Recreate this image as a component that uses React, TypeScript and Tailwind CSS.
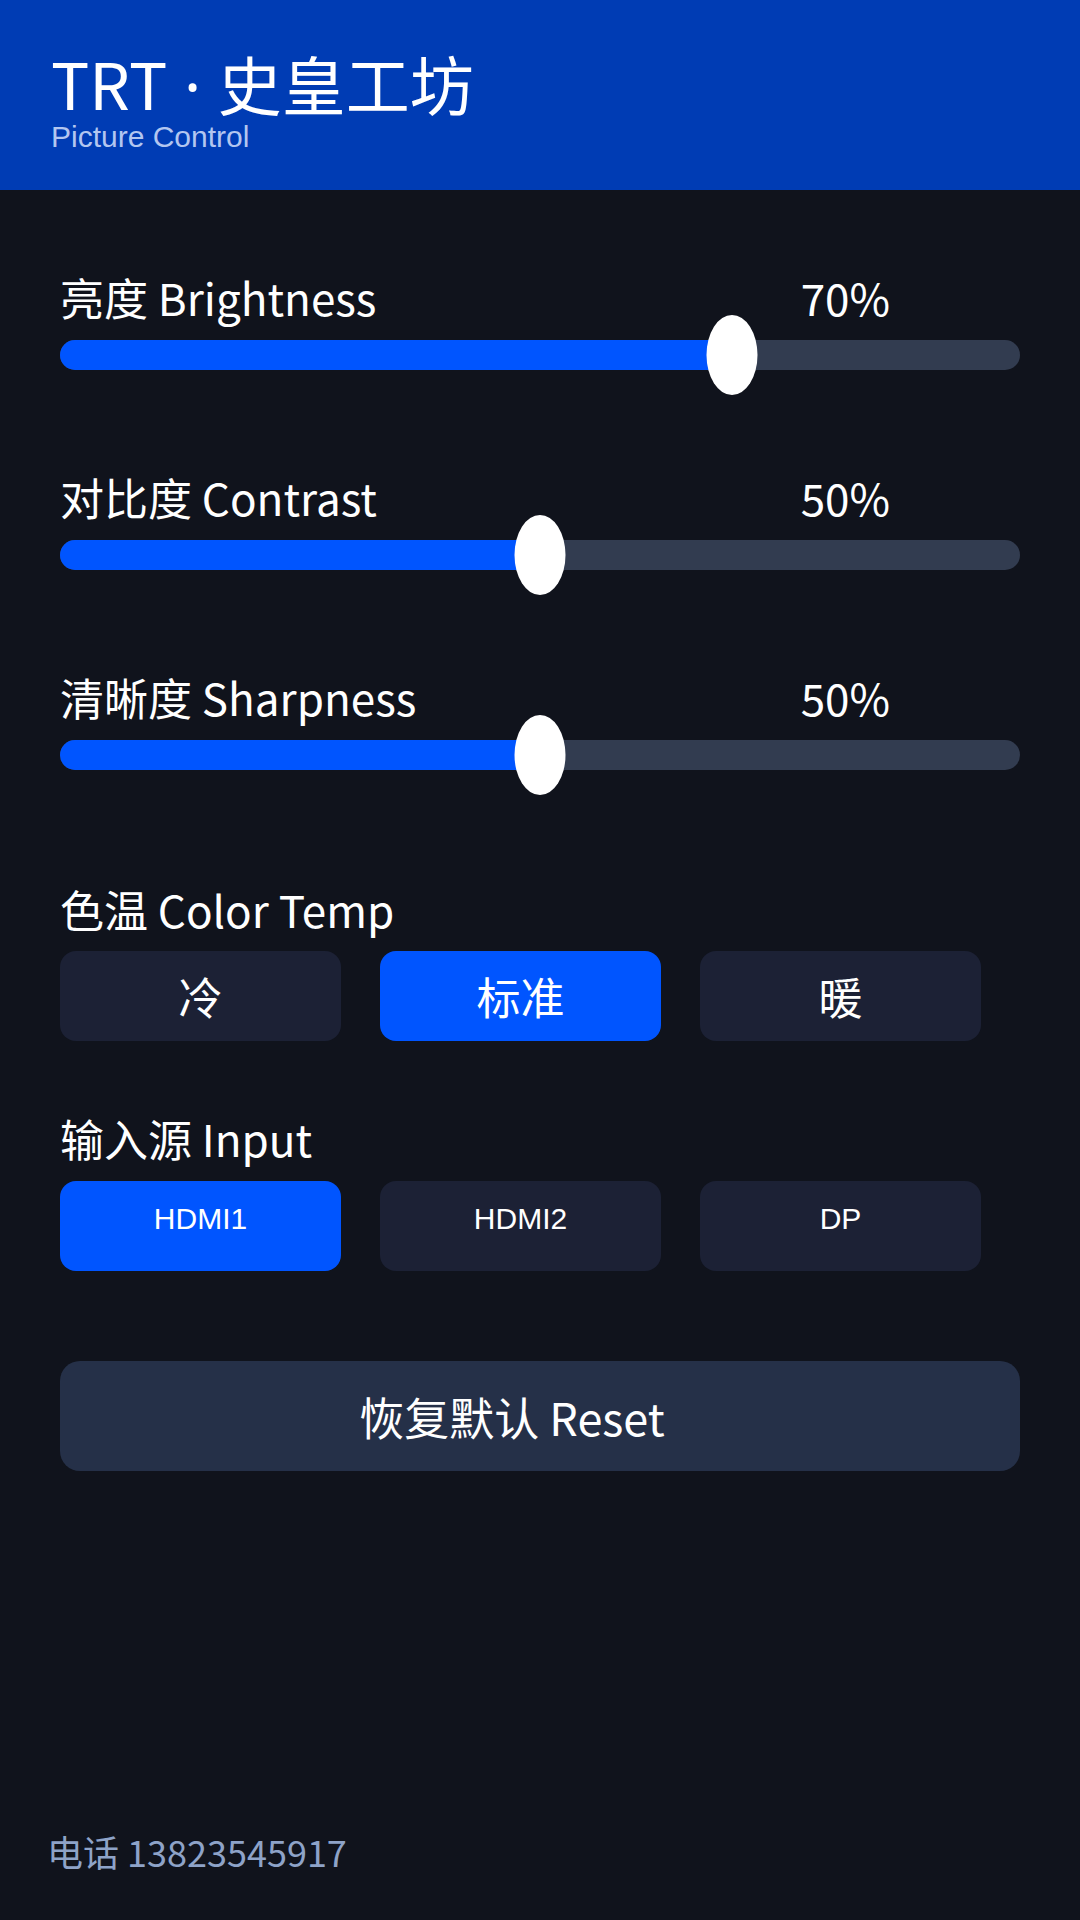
import React, { useState } from 'react'

const cjk = "font-['Noto_Sans_CJK_SC',sans-serif]"
const arial = "font-['Liberation_Sans',Arial,sans-serif]"

interface SliderProps {
  label: string
  value: number
}

function Slider({ label, value }: SliderProps) {
  return (
    <div className="flex flex-col">
      <div className="flex w-[830px] items-center justify-between text-[44px] leading-none text-white">
        <span>{label}</span>
        <span>{value}%</span>
      </div>
      <div className="relative mt-[21px] h-[30px] w-full rounded-full bg-[#323c50]">
        <div className="h-full rounded-full bg-[#0055ff]" style={{ width: `${value}%` }} />
        <div
          className="absolute top-1/2 h-[80px] w-[51px] -translate-x-1/2 -translate-y-1/2 rounded-[50%] bg-white"
          style={{ left: `${value}%` }}
        />
      </div>
    </div>
  )
}

export default function App() {
  const [temp, setTemp] = useState('标准')
  const [input, setInput] = useState('HDMI1')

  return (
    <div className={`flex min-h-[1920px] w-full flex-col bg-[#10131c] ${cjk}`}>
      {/* Header */}
      <div className="h-[190px] bg-[#003cb4] px-[51px] pt-[50px]">
        <h1 className="text-[64px] leading-none text-white">
          TRT<span className="font-['Noto_Sans',sans-serif]"> · </span>史皇工坊
        </h1>
        <p className={`mt-[4px] text-[30px] leading-none text-[#b3c6f0] ${arial}`}>Picture Control</p>
      </div>

      {/* Controls */}
      <div className="flex flex-col px-[60px] pt-[85px]">
        <div className="flex flex-col gap-[105px]">
          <Slider label="亮度 Brightness" value={70} />
          <Slider label="对比度 Contrast" value={50} />
          <Slider label="清晰度 Sharpness" value={50} />
        </div>

        <div className="mt-[117px] text-[44px] leading-none text-white">色温 Color Temp</div>
        <div className="mt-[20px] flex gap-[39px]">
          {['冷', '标准', '暖'].map(t => (
            <button
              key={t}
              onClick={() => setTemp(t)}
              className={`flex h-[90px] w-[281px] items-center justify-center rounded-2xl text-[44px] leading-none text-white ${
                temp === t ? 'bg-[#0055ff]' : 'bg-[#1c2135]'
              }`}
            >
              {t}
            </button>
          ))}
        </div>

        <div className="mt-[75px] text-[44px] leading-none text-white">输入源 Input</div>
        <div className="mt-[21px] flex gap-[39px]">
          {['HDMI1', 'HDMI2', 'DP'].map(s => (
            <button
              key={s}
              onClick={() => setInput(s)}
              className={`flex h-[90px] w-[281px] items-start justify-center rounded-2xl pt-[23px] text-[30px] leading-none text-white ${arial} ${
                input === s ? 'bg-[#0055ff]' : 'bg-[#1c2135]'
              }`}
            >
              {s}
            </button>
          ))}
        </div>

        <button className="mt-[90px] flex h-[110px] w-full items-center justify-center rounded-[20px] bg-[#253048] pr-[56px] text-[45px] leading-none text-white">
          恢复默认 Reset
        </button>
      </div>

      {/* Footer */}
      <div className="mt-auto px-[47px] pb-[51px] text-[36px] leading-none text-[#8ea3c8]">
        电话 13823545917
      </div>
    </div>
  )
}
